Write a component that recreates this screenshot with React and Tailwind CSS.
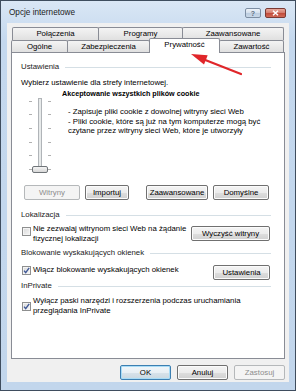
import React from "react";

const btnBase =
  "h-[15px] flex items-center justify-center rounded-[2px] border text-[7.8px] leading-none shrink-0 whitespace-nowrap";
const btnNormal =
  "border-[#707070] text-black bg-[linear-gradient(#f4f4f4_0%,#ececec_50%,#dedede_51%,#d0d0d0_100%)] shadow-[inset_0_0_0_1px_#fbfbfb]";
const btnDisabled = "border-[#b5b8ba] text-[#8d8d8d] bg-[#f4f4f4]";
const btnDefault =
  "border-[#3c7fb1] text-black bg-[linear-gradient(#f0f6fa_0%,#e8eff4_50%,#d8e3ea_51%,#cad8e1_100%)] shadow-[inset_0_0_0_1px_#a8dcf7]";

function Btn({ className, children, disabled, def }) {
  const v = disabled ? btnDisabled : def ? btnDefault : btnNormal;
  return <div className={`${btnBase} ${v} ${className || ""}`}>{children}</div>;
}

function Check({ checked, className }) {
  return (
    <span
      className={`w-[9px] h-[9px] border border-[#8e8f8f] bg-[linear-gradient(135deg,#d8d8d8,#f7f7f7)] shadow-[inset_0_0_0_1px_#f4f4f4] shrink-0 flex items-center justify-center ${className || ""}`}
    >
      {checked && (
        <svg width="7" height="7" viewBox="0 0 7 7">
          <path d="M1 3.6 L2.7 5.6 L6.2 0.8" stroke="#3f5896" strokeWidth="1.4" fill="none" />
        </svg>
      )}
    </span>
  );
}

function GroupHeader({ children, className }) {
  return (
    <div className={`flex items-center h-[10px] ${className || ""}`}>
      <span className="leading-[10px] text-[#1a1a1a] whitespace-nowrap">{children}</span>
      <span className="flex-1 h-px bg-[#d5dfe5] ml-[6px]" />
    </div>
  );
}

const tab =
  "h-full flex items-center justify-center border border-b-0 border-[#898c95] rounded-t-[2px] bg-[linear-gradient(#f4f4f4,#e0e0e0)] text-[7.8px] leading-none -ml-px first:ml-0 whitespace-nowrap";

function Slider() {
  const ticks = [12, 25, 39, 53, 66, 80];
  return (
    <svg width="41" height="84" viewBox="0 0 41 84" className="shrink-0">
      {ticks.map((t) => (
        <g key={t}>
          <rect x="8" y={t} width="3" height="1" fill="#b0b0b0" />
          <rect x="27" y={t} width="3" height="1" fill="#b0b0b0" />
        </g>
      ))}
      <rect x="17.5" y="9.5" width="3" height="72" fill="#e7eaea" stroke="#b0b4b8" strokeWidth="1" />
      <rect x="11.5" y="77.5" width="15" height="6" rx="1.5" fill="url(#th)" stroke="#6f7478" strokeWidth="1" />
      <defs>
        <linearGradient id="th" x1="0" y1="0" x2="0" y2="1">
          <stop offset="0" stopColor="#f7f7f7" />
          <stop offset="1" stopColor="#d4d4d4" />
        </linearGradient>
      </defs>
    </svg>
  );
}

export default function App() {
  return (
    <div className="relative w-[296px] h-[391px] border border-[#3f4d5e] bg-[linear-gradient(#dae7f5,#c4d8ee_40px,#c2d6ec)] flex flex-col [font-family:'Liberation_Sans',Arial,sans-serif] text-[7.8px] text-black overflow-hidden">
      {/* title bar */}
      <div className="h-[22px] flex items-center pl-[8px] pr-[9px] pt-[2px] shrink-0">
        <span className="text-[8.2px] text-[#1b1b1b] leading-none">Opcje internetowe</span>
        <div className="ml-auto flex items-center gap-[4px]">
          <div className="w-[16px] h-[10px] rounded-[2px] border border-[#7d8ea3] bg-[linear-gradient(#eef3f9,#d3dfec_50%,#bccde0_51%,#c9d8e8)] flex items-center justify-center text-[7px] font-bold text-[#5c6c80] leading-none">
            ?
          </div>
          <div className="w-[21px] h-[10px] rounded-[2px] border border-[#7a3a34] bg-[linear-gradient(#e9a99c,#d37a6c_50%,#c04a3a_51%,#d26a57)] flex items-center justify-center">
            <svg width="7" height="6" viewBox="0 0 7 6">
              <path d="M1 0.8 L6 5.2 M6 0.8 L1 5.2" stroke="#ffffff" strokeWidth="1.5" />
            </svg>
          </div>
        </div>
      </div>

      {/* client */}
      <div className="mx-[6px] h-[359px] bg-[#f0f0f0] shrink-0 flex flex-col px-[4px] pt-[4px]">
        {/* tab row 1 */}
        <div className="h-[13px] flex pl-[1px]">
          <div className={`${tab} w-[87px]`}>Połączenia</div>
          <div className={`${tab} w-[85px]`}>Programy</div>
          <div className={`${tab} w-[102px]`}>Zaawansowane</div>
        </div>
        {/* tab row 2 */}
        <div className="h-[12px] flex items-start">
          <div className={`${tab} w-[57px]`}>Ogólne</div>
          <div className={`${tab} w-[83px]`}>Zabezpieczenia</div>
          <div className="relative z-10 -ml-px -mt-[2px] h-[15px] w-[71px] flex items-center justify-center border border-b-0 border-[#898c95] rounded-t-[2px] bg-white leading-none pb-[2px] whitespace-nowrap">
            Prywatność
          </div>
          <div className={`${tab} w-[65px]`}>Zawartość</div>
        </div>

        {/* panel */}
        <div className="w-[274px] h-[307px] border border-[#898c95] bg-white pl-[9px] pr-[13px] pt-[9px] flex flex-col shrink-0 whitespace-nowrap">
          <GroupHeader>Ustawienia</GroupHeader>
          <div className="mt-[6px] leading-[10px]">Wybierz ustawienie dla strefy internetowej.</div>

          <div className="mt-[1px] flex">
            <Slider />
            <div className="flex flex-col">
              <div className="font-bold leading-[10px] text-[7.2px]">Akceptowanie wszystkich plików cookie</div>
              <div className="mt-[8px] pl-[6px] leading-[9.5px]">
                <div>- Zapisuje pliki cookie z dowolnej witryny sieci Web</div>
                <div>- Pliki cookie, które są już na tym komputerze mogą być</div>
                <div>czytane przez witryny sieci Web, które je utworzyły</div>
              </div>
            </div>
          </div>

          <div className="mt-[12px] flex">
            <Btn disabled className="w-[56px] ml-[3px]">Witryny</Btn>
            <Btn className="w-[44px] ml-[5px]">Importuj</Btn>
            <Btn className="w-[62px] ml-[17px]">Zaawansowane</Btn>
            <Btn className="w-[56px] ml-[5px]">Domyślne</Btn>
          </div>

          <GroupHeader className="mt-[10px]">Lokalizacja</GroupHeader>
          <div className="mt-[4px] flex items-start">
            <Check className="ml-[1px] mt-[3px]" />
            <div className="ml-[2px] leading-[9.5px]">
              <div>Nie zezwalaj witrynom sieci Web na żądanie</div>
              <div>fizycznej lokalizacji</div>
            </div>
            <Btn className="w-[79px] h-[14px] ml-auto mr-[1px] mt-[2px]">Wyczyść witryny</Btn>
          </div>

          <GroupHeader className="mt-[5px]">Blokowanie wyskakujących okienek</GroupHeader>
          <div className="mt-[7px] flex items-start">
            <Check checked className="ml-[1px] mt-[1px]" />
            <div className="ml-[2px] leading-[10px]">Włącz blokowanie wyskakujących okienek</div>
            <Btn className="w-[57px] ml-auto mr-[1px]">Ustawienia</Btn>
          </div>

          <GroupHeader className="mt-[1px]">InPrivate</GroupHeader>
          <div className="mt-[5px] flex items-start">
            <Check checked className="ml-[1px] mt-[6px]" />
            <div className="ml-[2px] leading-[9.5px]">
              <div>Wyłącz paski narzędzi i rozszerzenia podczas uruchamiania</div>
              <div>przeglądania InPrivate</div>
            </div>
          </div>
        </div>

        {/* bottom buttons */}
        <div className="mt-[6px] flex justify-end gap-[6px]">
          <Btn def className="w-[51px]">OK</Btn>
          <Btn className="w-[51px]">Anuluj</Btn>
          <Btn disabled className="w-[51px]">Zastosuj</Btn>
        </div>
      </div>

      {/* red arrow overlay */}
      <svg className="absolute left-0 top-0 pointer-events-none" width="296" height="391" viewBox="0 0 296 391">
        <line x1="240" y1="73" x2="203" y2="58.5" stroke="#e0262a" strokeWidth="2.2" strokeLinecap="round" />
        <polygon points="190,53 203,63.6 206.7,54.3" fill="#e0262a" />
      </svg>
    </div>
  );
}
